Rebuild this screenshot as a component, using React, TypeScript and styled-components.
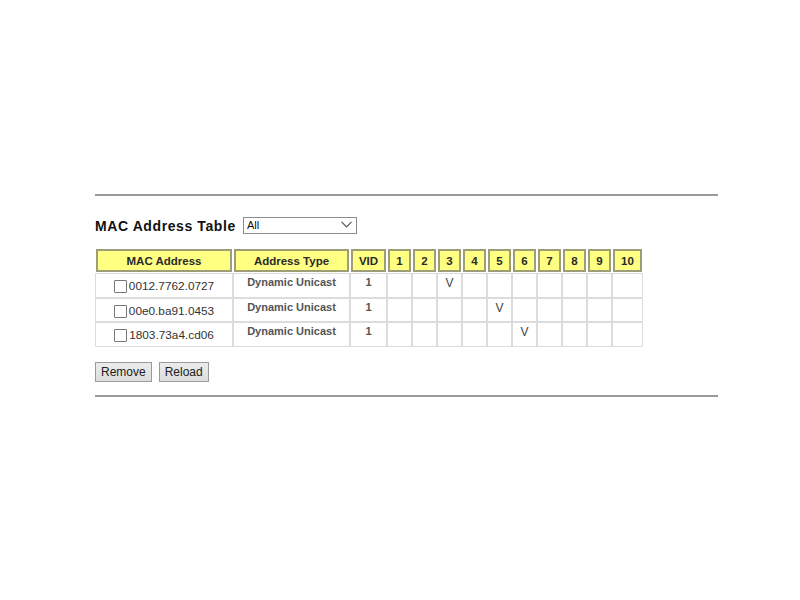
import React from "react"
import styled, { createGlobalStyle } from "styled-components"

const Global = createGlobalStyle`
  html, body {
    margin: 0;
    background: #fff;
  }
  body {
    font-family: "Liberation Sans", Arial, sans-serif;
    color: #333;
  }
`

// Components
const Page = styled.div`
  padding: 194px 0 0 95px;
  width: 623px;
`

const Rule = styled.div`
  height: 2px;
  background: #9a9a9a;
`

const TitleRow = styled.div`
  display: flex;
  align-items: center;
  margin-top: 21px;
  height: 17px;
`

const Title = styled.h2`
  margin: 0 7px 0 0;
  font-size: 14px;
  font-weight: bold;
  letter-spacing: 0.6px;
  color: #111;
`

const Select = styled.div`
  position: relative;
  box-sizing: border-box;
  width: 114px;
  height: 17px;
  border: 1px solid #8c8c8c;
  font-size: 11px;
  line-height: 15px;
  padding-left: 3px;
  color: #111;
  svg {
    position: absolute;
    right: 4px;
    top: 3px;
  }
`

const Table = styled.table`
  margin-top: 14px;
  border-collapse: separate;
  border-spacing: 0;
  table-layout: fixed;
  width: 548px;
`

const Head = styled.th<{ w: number }>`
  width: ${p => p.w}px;
  height: 25px;
  box-sizing: border-box;
  padding: 0;
  background: #ffff82;
  border: 1px solid #fff;
  box-shadow: inset 0 0 0 2px #9d9d78;
  font-size: 11.5px;
  font-weight: bold;
  color: #2a2a2a;
  text-align: center;
`

const Cell = styled.td<{ mid?: boolean }>`
  height: 24.5px;
  box-sizing: border-box;
  padding: 2px 0 0;
  border: 1px solid #dcdcdc;
  vertical-align: ${p => (p.mid ? "middle" : "top")};
  text-align: center;
  font-size: ${p => (p.mid ? "11.8px" : "11px")};
  font-weight: ${p => (p.mid ? "normal" : "bold")};
  color: ${p => (p.mid ? "#333" : "#555")};
`

const Mark = styled.span`
  font-size: 12px;
  font-weight: normal;
  color: #444;
`

const Box = styled.span`
  display: inline-block;
  width: 11px;
  height: 11px;
  border: 1px solid #767676;
  border-radius: 1px;
  vertical-align: -3px;
  margin-right: 2px;
  background: #fff;
`

const ButtonRow = styled.div`
  display: flex;
  gap: 7px;
  margin: 15px 0 13px;
`

const Button = styled.button`
  height: 20px;
  padding: 0 5px;
  font-family: "Liberation Sans", Arial, sans-serif;
  font-size: 12px;
  color: #222;
  background: linear-gradient(#ececec, #dcdcdc);
  border: 1px solid #9a9a9a;
  border-radius: 0;
`

const rows = [
  { mac: "0012.7762.0727", port: 3 },
  { mac: "00e0.ba91.0453", port: 5 },
  { mac: "1803.73a4.cd06", port: 6 },
]

const ports = [1, 2, 3, 4, 5, 6, 7, 8, 9, 10]

const Chevron = () => (
  <svg width="11" height="7" viewBox="0 0 11 7">
    <path d="M0.5 0.8 L5.5 5.8 L10.5 0.8" fill="none" stroke="#555" strokeWidth="1.2" />
  </svg>
)

// Page
const App: React.FC = () => {
  return (
    <Page>
      <Global />
      <Rule />
      <TitleRow>
        <Title>MAC Address Table</Title>
        <Select>
          All
          <Chevron />
        </Select>
      </TitleRow>
      <Table>
        <thead>
          <tr>
            <Head w={138}>MAC Address</Head>
            <Head w={117}>Address Type</Head>
            <Head w={37}>VID</Head>
            {ports.map(n => (
              <Head key={n} w={n === 10 ? 31 : 25}>
                {n}
              </Head>
            ))}
          </tr>
        </thead>
        <tbody>
          {rows.map(r => (
            <tr key={r.mac}>
              <Cell mid>
                <Box />
                {r.mac}
              </Cell>
              <Cell>Dynamic Unicast</Cell>
              <Cell>1</Cell>
              {ports.map(n => (
                <Cell key={n}>{n === r.port && <Mark>V</Mark>}</Cell>
              ))}
            </tr>
          ))}
        </tbody>
      </Table>
      <ButtonRow>
        <Button>Remove</Button>
        <Button>Reload</Button>
      </ButtonRow>
      <Rule />
    </Page>
  )
}

export default App
